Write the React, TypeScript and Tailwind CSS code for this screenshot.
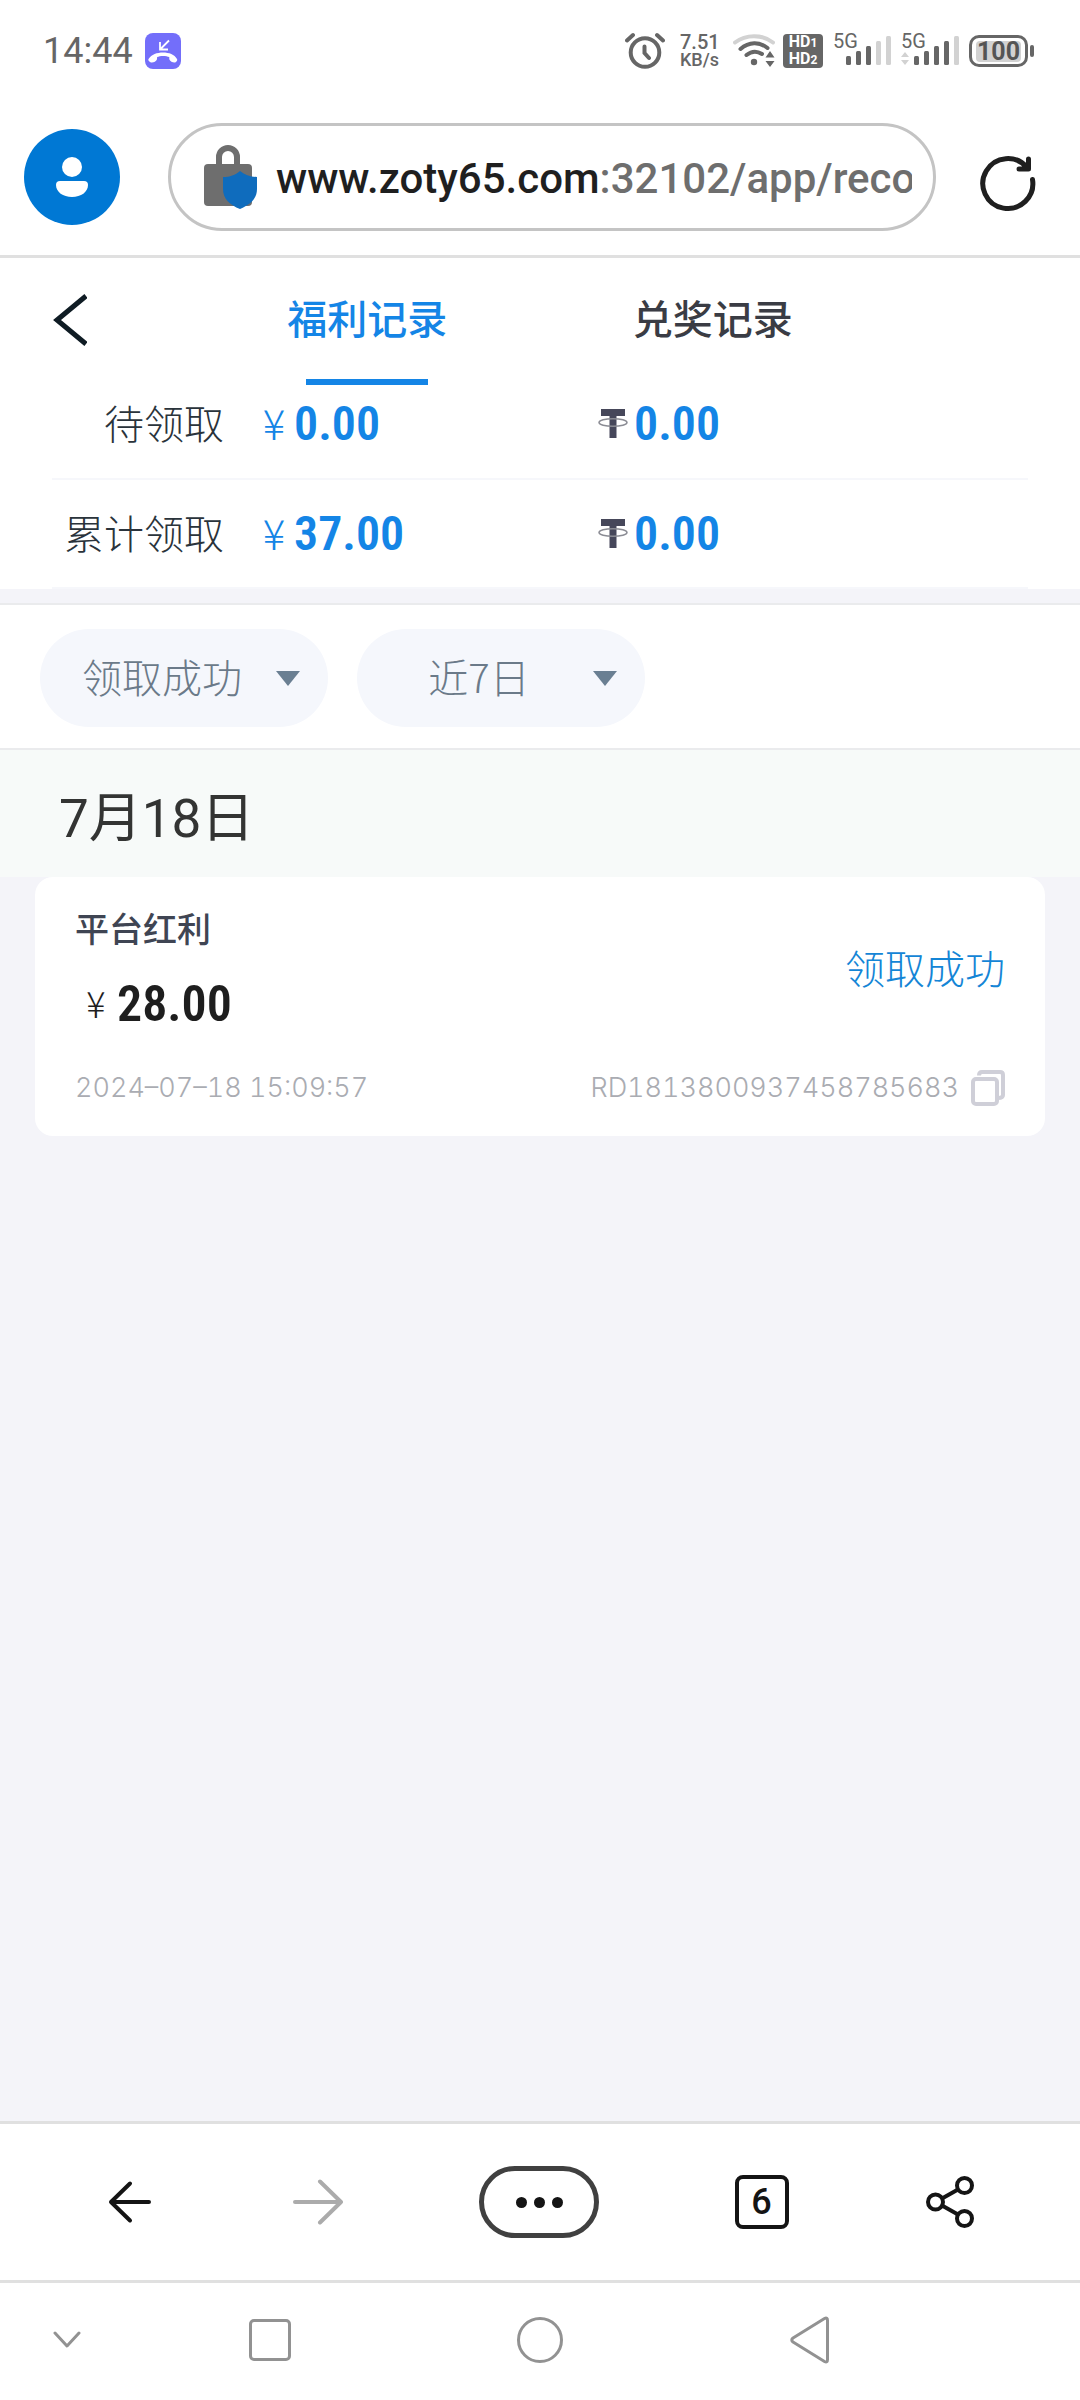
const sans = "font-['Roboto','Noto_Sans_CJK_SC',sans-serif]";
const cjk = "font-['Noto_Sans_CJK_SC',sans-serif]";
const digits = "font-['Roboto_Condensed','Liberation_Sans_Narrow','Roboto',sans-serif]";

const totals = [
  { label: "待领取", cny: "0.00", usdt: "0.00" },
  { label: "累计领取", cny: "37.00", usdt: "0.00" },
];

const filters = [
  { id: "status", label: "领取状态", value: "领取成功" },
  { id: "range", label: "时间范围", value: "近7日" },
];

const records = [
  {
    title: "平台红利",
    amount: "28.00",
    status: "领取成功",
    time: "2024–07–18 15:09:57",
    order: "RD1813800937458785683",
  },
];

function Signal({ active, arrows }: { active: number; arrows?: boolean }) {
  return (
    <div className="relative h-9 w-[58px]">
      <span className="absolute left-0 top-0 text-[20px] leading-[16px] text-[#666]">5G</span>
      <svg className="absolute inset-0" width="58" height="36" viewBox="0 0 58 36" aria-hidden="true">
        {[9, 14, 19, 24, 29].map((h, i) => (
          <rect key={h} x={13 + i * 10} y={32 - h} width="5" height={h} rx="1.5" fill={i < active ? "#666" : "#d2d2d2"} />
        ))}
        {arrows && <path d="M4 19l4 5H0zM4 32l4-5H0z" fill="#d2d2d2" />}
      </svg>
    </div>
  );
}

function StatusBar() {
  return (
    <div className="flex h-[101px] items-start justify-between pl-[43px] pr-[46px] pt-8">
      <div className="flex items-center gap-3">
        <span className="text-[36px] leading-[38px] text-[#666]">14:44</span>
        <svg width="36" height="36" viewBox="0 0 36 36" aria-label="未接来电">
          <rect width="36" height="36" rx="8" fill="#736efa" />
          <path d="M24 7.500l-9 9M15 9v7.500h8" fill="none" stroke="#fff" strokeWidth="1.800" />
          <path
            d="M3.500 26c3-4.500 8.500-6.500 14.500-6.500S29.500 21.500 32 26c.8 1.500-.8 3.500-2.600 3.500-2 0-4.200-1.300-4.900-2.800-.5-1.100 0-2-.3-2.600-2.800-1.500-9.400-1.500-12 0-.3.600.1 1.500-.4 2.600-.7 1.500-2.900 2.800-4.900 2.800C5 29.500 2.700 27.500 3.500 26z"
            fill="#fff"
          />
        </svg>
      </div>
      <div className="flex items-center">
        <svg width="40" height="38" viewBox="0 0 40 38" fill="none" stroke="#666" strokeWidth="4" strokeLinecap="round" aria-label="闹钟">
          <circle cx="20" cy="20.500" r="14.300" />
          <path d="M19.500 14.500v6.500l4.500 5M2 8.500L8 3M38 8.500L32 3" />
        </svg>
        <div className="ml-[15px] flex w-[40px] flex-col font-medium text-[#666]">
          <span className="text-[20px] leading-[18px]">7.51</span>
          <span className="text-[18px] leading-[18px]">KB/s</span>
        </div>
        <svg className="ml-[13px]" width="42" height="36" viewBox="0 0 42 36" fill="none" strokeWidth="4" strokeLinecap="round" aria-label="无线网络">
          <path d="M2 9.500C13 1 29 1 40 9.500" stroke="#d2d2d2" />
          <path d="M7.500 16c8.500-7.500 19-7.500 27-1M13.500 22c5-4 10-4.500 15.500-1" stroke="#666" />
          <circle cx="21" cy="29" r="3.200" fill="#666" />
          <path d="M37 18l4.500 6.500h-9zM37 34l4.500-6h-9z" fill="#666" />
        </svg>
        <div className="ml-2 flex h-[34px] w-[40px] flex-col items-center justify-center rounded bg-[#666] text-white">
          <span className="text-[16px] font-bold leading-[15px]">
            HD<span className="text-[12px]">1</span>
          </span>
          <span className="text-[16px] font-bold leading-[15px]">
            HD<span className="text-[12px]">2</span>
          </span>
        </div>
        <div className="ml-[10px] flex gap-[10px]">
          <Signal active={3} />
          <Signal active={4} arrows />
        </div>
        <div className="ml-[10px] flex items-center gap-[2px]">
          <div className="flex h-8 w-[59px] items-center justify-center rounded-[10px] border-[3px] border-[#666]">
            <span className="rounded bg-[#d2d2d2] px-px text-[25px] font-bold leading-[21px] text-[#555]">100</span>
          </div>
          <span className="h-3 w-[4px] rounded-sm bg-[#666]" />
        </div>
      </div>
    </div>
  );
}

function AddressBar() {
  return (
    <div className="flex items-center pb-6 pl-6 pr-[42px]">
      <button type="button" aria-label="账户" className="flex size-24 shrink-0 items-center justify-center rounded-full bg-[#0078d4]">
        <svg width="32" height="42" viewBox="0 0 32 42" fill="#fff" aria-hidden="true">
          <circle cx="16" cy="11" r="10" />
          <path d="M4 25h24a4 4 0 0 1 4 4c0 7-7 12-16 12S0 36 0 29a4 4 0 0 1 4-4z" />
        </svg>
      </button>
      <button
        type="button"
        aria-label="地址栏"
        className="ml-12 flex h-[108px] min-w-0 flex-1 items-center rounded-full border-[3px] border-[#c4c4c4] pl-[33px] pr-[21px]"
      >
        <svg className="shrink-0" width="54" height="64" viewBox="0 0 54 64" aria-hidden="true">
          <path d="M15 22V12a9 9 0 0 1 18 0v10" fill="none" stroke="#6e6e6e" strokeWidth="6" />
          <rect y="19" width="48" height="42" rx="4" fill="#6e6e6e" />
          <path d="M36 26c5 4 10 6 17 6v12c0 10-7 16-17 20-10-4-17-10-17-20V32c7 0 12-2 17-6z" fill="#0f6cbd" />
        </svg>
        <span className="ml-[18px] min-w-0 flex-1 overflow-hidden whitespace-nowrap pt-1 text-left text-[42px] font-medium leading-[56px] text-[#6e6e6e]">
          <span className="text-[#1f1f1f]">www.zoty65.com</span>:32102/app/reco
        </span>
      </button>
      <button type="button" aria-label="刷新" className="ml-[42px] mt-3">
        <svg width="60" height="60" viewBox="0 0 60 60" fill="none" stroke="#1f1f1f" strokeWidth="5" strokeLinecap="round" strokeLinejoin="round" aria-hidden="true">
          <path d="M54.500 26.500A25 25 0 1 1 49 14.500M50.500 6v10H41" />
        </svg>
      </button>
    </div>
  );
}

function Tether() {
  return (
    <svg className="shrink-0" width="30" height="30" viewBox="0 0 30 30" aria-label="USDT">
      <path d="M3 0h24v7h-8.500v22h-7V7H3z" fill="#46475a" />
      <ellipse cx="15" cy="13.500" rx="14" ry="3.800" fill="none" stroke="#8b8c94" strokeWidth="1.500" />
    </svg>
  );
}

function RecordHeader() {
  return (
    <div className="flex bg-white">
      <div className="flex w-[18%] shrink-0 items-center pb-1 pl-[51px]">
        <button type="button" aria-label="返回">
          <svg width="36" height="54" viewBox="0 0 36 54" fill="none" stroke="#0f1c24" strokeWidth="5" aria-hidden="true">
            <path d="M35 3L6 27l29 24" />
          </svg>
        </button>
      </div>
      <div role="tablist" className={`flex flex-1 text-[40px] font-medium leading-[60px] ${cjk}`}>
        <button type="button" role="tab" aria-selected="true" className="flex flex-1 flex-col items-center pt-[29px] text-[#1485e6]">
          福利记录
          <span className="mt-8 h-[6px] w-[122px] bg-[#1485e6]" />
        </button>
        <button type="button" role="tab" aria-selected="false" className="flex flex-1 flex-col items-center pt-[29px] text-[#3a3c44]">
          兑奖记录
        </button>
      </div>
      <div className="w-[18%] shrink-0" />
    </div>
  );
}

function Totals() {
  return (
    <div className="bg-white px-[52px]">
      <table className="w-full">
        <tbody>
          {totals.map((t, i) => (
            <tr key={t.label} className={i === 0 ? "h-[94px] border-b-2 border-[#f6f7fb]" : "h-[109px] border-b-2 border-[#f6f7fb]"}>
              <th
                scope="row"
                className={`w-[172px] p-0 text-right text-[40px] font-light leading-[56px] text-[#2a333b] ${i === 0 ? "pb-5" : "pb-1"} ${cjk}`}
              >
                {t.label}
              </th>
              <td className={`w-[374px] p-0 pl-[30px] ${i === 0 ? "pb-4" : ""}`}>
                <div className="flex items-center text-[#1485e6]">
                  <span className={`w-10 pb-1 text-center text-[42px] font-light leading-[56px] ${cjk}`}>¥</span>
                  <span className={`text-[48px] font-semibold leading-[60px] ${digits}`}>{t.cny}</span>
                </div>
              </td>
              <td className={`p-0 ${i === 0 ? "pb-4" : ""}`}>
                <div className="flex items-center gap-[6px] text-[#1485e6]">
                  <Tether />
                  <span className={`text-[48px] font-semibold leading-[60px] ${digits}`}>{t.usdt}</span>
                </div>
              </td>
            </tr>
          ))}
        </tbody>
      </table>
    </div>
  );
}

function Filters() {
  return (
    <div className="mt-[14px] flex gap-[29px] border-y-2 border-[#eaebed] bg-white px-10 pb-[21px] pt-6">
      {filters.map((f) => (
        <div key={f.id} className="relative">
          <select
            id={f.id}
            aria-label={f.label}
            defaultValue={f.value}
            className={`h-[98px] w-[288px] appearance-none rounded-full bg-[#f5f7fc] pb-1 pr-11 text-[40px] font-light text-[#6b7a89] [text-align-last:center] ${cjk}`}
          >
            <option value={f.value}>{f.value}</option>
          </select>
          <svg className="pointer-events-none absolute right-[28px] top-[42px]" width="24" height="15" viewBox="0 0 24 15" aria-hidden="true">
            <path d="M0 0h24L12 15z" fill="#6a7f92" />
          </svg>
        </div>
      ))}
    </div>
  );
}

function RecordCard({ record }: { record: (typeof records)[number] }) {
  return (
    <li className="mx-[35px] flex flex-col rounded-[18px] bg-white px-10 pb-[25px] pt-[26px]">
      <div className="flex items-center justify-between">
        <div>
          <h3 className={`text-[34px] font-medium leading-[50px] text-[#3f4553] ${cjk}`}>{record.title}</h3>
          <div className="mt-[21px] flex items-center text-[#1e1e1e]">
            <span className={`w-[42px] pb-1 text-center text-[36px] font-light leading-[56px] ${cjk}`}>¥</span>
            <span className={`text-[50px] font-semibold leading-[60px] ${digits}`}>{record.amount}</span>
          </div>
        </div>
        <span className={`pb-1 text-[40px] font-light leading-[60px] text-[#1485d6] ${cjk}`}>{record.status}</span>
      </div>
      <div className="mt-[31px] flex items-center justify-between font-['Inter',sans-serif] text-[27px] font-light leading-[46px] tabular-nums text-[#aaacb2]">
        <time>{record.time}</time>
        <div className="flex items-center gap-3">
          {record.order}
          <button type="button" aria-label="复制订单号">
            <svg width="34" height="36" viewBox="0 0 34 36" fill="none" stroke="#cfcfd8" strokeWidth="4" aria-hidden="true">
              <rect x="2" y="9" width="24" height="25" rx="3" />
              <path d="M8 5.500c0-2 1-3.500 3-3.500h18c2 0 3 1 3 3v20c0 2-1.500 3-5 3" />
            </svg>
          </button>
        </div>
      </div>
    </li>
  );
}

function Toolbar() {
  return (
    <nav aria-label="浏览器工具栏" className="flex h-[159px] items-center justify-between border-t-[3px] border-[#e0e0e0] bg-white px-[104px]">
      <button type="button" aria-label="后退" className="flex w-[52px] justify-center">
        <svg width="44" height="44" viewBox="0 0 44 44" fill="none" stroke="#141414" strokeWidth="4" strokeLinecap="round" strokeLinejoin="round" aria-hidden="true">
          <path d="M41 22H3M22 3.500L3 22l19 18.500" />
        </svg>
      </button>
      <button type="button" aria-label="前进" className="flex w-[52px] justify-center">
        <svg width="50" height="46" viewBox="0 0 50 46" fill="none" stroke="#ababab" strokeWidth="4" strokeLinecap="round" strokeLinejoin="round" aria-hidden="true">
          <path d="M2 23h46M27 2.500L48 23 27 43.500" />
        </svg>
      </button>
      <button type="button" aria-label="更多" className="flex h-[72px] w-[120px] items-center justify-center gap-[7px] rounded-full border-[5px] border-[#404040]">
        <span className="size-[11px] rounded-full bg-[#141414]" />
        <span className="size-[11px] rounded-full bg-[#141414]" />
        <span className="size-[11px] rounded-full bg-[#141414]" />
      </button>
      <button
        type="button"
        aria-label="标签页"
        className="flex h-[54px] w-[54px] items-center justify-center rounded-lg border-4 border-[#141414] text-[36px] font-medium leading-[36px] text-[#141414]"
      >
        6
      </button>
      <button type="button" aria-label="分享" className="flex w-[52px] justify-center">
        <svg width="50" height="54" viewBox="0 0 50 54" fill="none" stroke="#141414" strokeWidth="4" aria-hidden="true">
          <circle cx="10.500" cy="27" r="7.500" />
          <circle cx="39.500" cy="10.500" r="7.500" />
          <circle cx="39.500" cy="43.500" r="7.500" />
          <path d="M17 23.500L33 14.500M17 30.500l16 9" />
        </svg>
      </button>
    </nav>
  );
}

function SystemNav() {
  return (
    <nav aria-label="系统导航" className="flex h-[120px] items-center border-t-[3px] border-[#e0e0e0] bg-white pb-[3px] pr-[12.5%]">
      <button type="button" aria-label="收起" className="flex w-[14.285%] justify-center">
        <svg width="28" height="18" viewBox="0 0 28 18" fill="none" stroke="#929292" strokeWidth="3" strokeLinecap="round" strokeLinejoin="round" aria-hidden="true">
          <path d="M2 2l12 13L26 2" />
        </svg>
      </button>
      <button type="button" aria-label="最近任务" className="flex flex-1 justify-center">
        <span className="size-[42px] rounded-[5px] border-[3px] border-[#929292]" />
      </button>
      <button type="button" aria-label="主屏幕" className="flex flex-1 justify-center">
        <span className="size-[46px] rounded-full border-[3px] border-[#929292]" />
      </button>
      <button type="button" aria-label="返回" className="flex flex-1 justify-center">
        <svg width="40" height="48" viewBox="0 0 40 48" fill="none" stroke="#929292" strokeWidth="3" strokeLinejoin="round" aria-hidden="true">
          <path d="M34.500 2.500q3-1.500 3 2v39q0 3.500-3 2L3 26q-2.500-2 0-4z" />
        </svg>
      </button>
    </nav>
  );
}

export default function App() {
  return (
    <div className={`flex min-h-screen flex-col bg-[#f4f4f9] ${sans}`}>
      <header className="border-b-[3px] border-[#e0e0e0] bg-white">
        <StatusBar />
        <div className="pt-[22px]">
          <AddressBar />
        </div>
      </header>

      <main className="flex flex-1 flex-col">
        <RecordHeader />
        <Totals />
        <Filters />
        <section>
          <h2 className="bg-[#f7faf9] px-[59px] pb-[18px] pt-[29px] text-[53px] leading-[80px] text-[#333433]">7月18日</h2>
          <ul>
            {records.map((r) => (
              <RecordCard key={r.order} record={r} />
            ))}
          </ul>
        </section>
      </main>

      <Toolbar />
      <SystemNav />
    </div>
  );
}
